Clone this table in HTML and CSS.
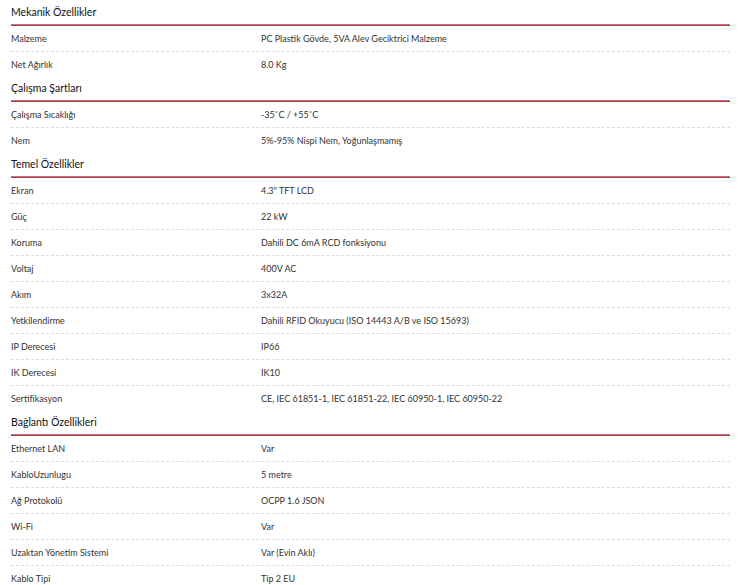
FILE: index.html
```html
<!DOCTYPE html>
<html lang="tr">
<head>
<meta charset="utf-8">
<link rel="stylesheet" href="styles.css">
</head>
<body>
<div class="specs">
  <section class="group">
    <h3 class="group-title">Mekanik Özellikler</h3>
    <div class="rows">
      <div class="row"><span class="label">Malzeme</span><span class="value">PC Plastik Gövde, 5VA Alev Geciktrici Malzeme</span></div>
      <div class="row"><span class="label">Net Ağırlık</span><span class="value">8.0 Kg</span></div>
    </div>
  </section>
  <section class="group">
    <h3 class="group-title">Çalışma Şartları</h3>
    <div class="rows">
      <div class="row"><span class="label">Çalışma Sıcaklığı</span><span class="value">-35˚C / +55˚C</span></div>
      <div class="row"><span class="label">Nem</span><span class="value">5%-95% Nispi Nem, Yoğunlaşmamış</span></div>
    </div>
  </section>
  <section class="group">
    <h3 class="group-title">Temel Özellikler</h3>
    <div class="rows">
      <div class="row"><span class="label">Ekran</span><span class="value">4.3" TFT LCD</span></div>
      <div class="row"><span class="label">Güç</span><span class="value">22 kW</span></div>
      <div class="row"><span class="label">Koruma</span><span class="value">Dahili DC 6mA RCD fonksiyonu</span></div>
      <div class="row"><span class="label">Voltaj</span><span class="value">400V AC</span></div>
      <div class="row"><span class="label">Akım</span><span class="value">3x32A</span></div>
      <div class="row"><span class="label">Yetkilendirme</span><span class="value">Dahili RFID Okuyucu (ISO 14443 A/B ve ISO 15693)</span></div>
      <div class="row"><span class="label">IP Derecesi</span><span class="value">IP66</span></div>
      <div class="row"><span class="label">IK Derecesi</span><span class="value">IK10</span></div>
      <div class="row"><span class="label">Sertifikasyon</span><span class="value">CE, IEC 61851-1, IEC 61851-22, IEC 60950-1, IEC 60950-22</span></div>
    </div>
  </section>
  <section class="group">
    <h3 class="group-title">Bağlantı Özellikleri</h3>
    <div class="rows">
      <div class="row"><span class="label">Ethernet LAN</span><span class="value">Var</span></div>
      <div class="row"><span class="label">KabloUzunlugu</span><span class="value">5 metre</span></div>
      <div class="row"><span class="label">Ağ Protokolü</span><span class="value">OCPP 1.6 JSON</span></div>
      <div class="row"><span class="label">Wi-Fi</span><span class="value">Var</span></div>
      <div class="row"><span class="label">Uzaktan Yönetim Sistemi</span><span class="value">Var (Evin Aklı)</span></div>
      <div class="row"><span class="label">Kablo Tipi</span><span class="value">Tip 2 EU</span></div>
    </div>
  </section>
</div>
</body>
</html>
```

FILE: styles.css
```css
html, body {
  margin: 0;
  padding: 0;
  background: #fff;
}
body {
  font-family: "Lato", "Liberation Sans", sans-serif;
  color: #333;
}
.specs {
  margin: 0 18px 0 11px;
  padding-top: 1px;
}
.group-title {
  margin: 0;
  height: 23px;
  line-height: 23px;
  font-size: 10.5px;
  font-weight: normal;
  color: #111;
  border-bottom: 1px solid #8c8c8c;
}
.rows {
  border-top: 1px solid #d22a2f;
}
.row {
  display: grid;
  grid-template-columns: 250px 1fr;
  height: 25px;
  line-height: 25px;
  font-size: 9px;
  color: #333;
  border-bottom: 1px dashed #dcdcdc;
}
.row:last-child {
  border-bottom: none;
}
```
